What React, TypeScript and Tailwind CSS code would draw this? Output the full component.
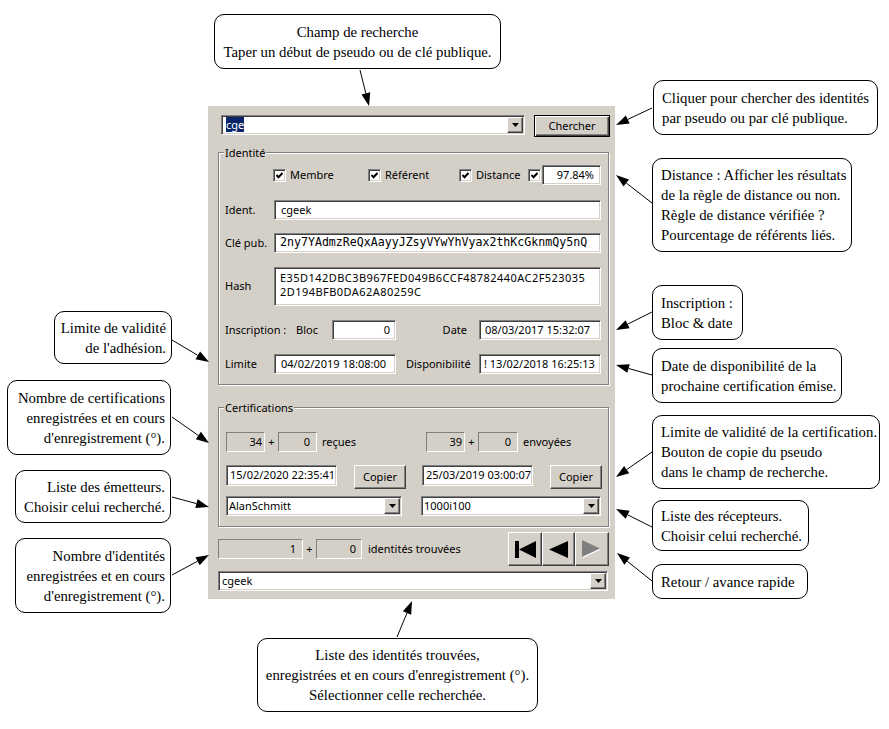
import React from 'react';

const sunken =
  'border border-t-[#808080] border-l-[#808080] border-r-white border-b-white shadow-[inset_1px_1px_0_#404040,inset_-1px_-1px_0_#d4d0c8]';
const flat = 'border border-t-[#808080] border-l-[#808080] border-r-white border-b-white';
const raised =
  'bg-[#d4d0c8] border border-t-white border-l-white border-r-[#404040] border-b-[#404040] shadow-[inset_-1px_-1px_0_#808080]';
const etched = 'border border-[#808080] shadow-[1px_1px_0_#fff,inset_1px_1px_0_#fff]';

const callouts = [
  { pos: 'left-[214px] top-[14px] w-[287px] h-[55px] items-center', lines: ['Champ de recherche', 'Taper un début de pseudo ou de clé publique.'] },
  { pos: 'left-[653px] top-[80px] w-[225px] h-[55px] items-start pl-2', lines: ['Cliquer pour chercher des identités', 'par pseudo ou par clé publique.'] },
  {
    pos: 'left-[652px] top-[158px] w-[200px] h-[94px] items-start pl-2',
    lines: ['Distance : Afficher les résultats', 'de la règle de distance ou non.', 'Règle de distance vérifiée ?', 'Pourcentage de référents liés.'],
  },
  { pos: 'left-[652px] top-[285px] w-[91px] h-[55px] items-start pl-2', lines: ['Inscription :', 'Bloc & date'] },
  { pos: 'left-[652px] top-[348px] w-[190px] h-[55px] items-start pl-2', lines: ['Date de disponibilité de la', 'prochaine certification émise.'] },
  {
    pos: 'left-[652px] top-[415px] w-[228px] h-[74px] items-start pl-2',
    lines: ['Limite de validité de la certification.', 'Bouton de copie du pseudo', 'dans le champ de recherche.'],
  },
  { pos: 'left-[652px] top-[500px] w-[157px] h-[51px] items-start pl-2', lines: ['Liste des récepteurs.', 'Choisir celui recherché.'] },
  { pos: 'left-[652px] top-[564px] w-[156px] h-[35px] items-start pl-2', lines: ['Retour / avance rapide'] },
  { pos: 'left-[54px] top-[311px] w-[118px] h-[53px] items-end pr-[5px]', lines: ['Limite de validité', "de l'adhésion."] },
  {
    pos: 'left-[7px] top-[380px] w-[164px] h-[75px] items-end pr-[5px]',
    lines: ['Nombre de certifications', 'enregistrées et en cours', "d'enregistrement (°)."],
  },
  { pos: 'left-[15px] top-[470px] w-[156px] h-[53px] items-end pr-[5px]', lines: ['Liste des émetteurs.', 'Choisir celui recherché.'] },
  {
    pos: 'left-[15px] top-[538px] w-[156px] h-[75px] items-end pr-[5px]',
    lines: ["Nombre d'identités", 'enregistrées et en cours', "d'enregistrement (°)."],
  },
  {
    pos: 'left-[257px] top-[638px] w-[281px] h-[74px] items-center',
    lines: ['Liste des identités trouvées,', "enregistrées et en cours d'enregistrement (°).", 'Sélectionner celle recherchée.'],
  },
];

const arrows: [number, number, number, number][] = [
  [360, 70, 369, 106],
  [652, 108, 616, 125],
  [652, 203, 616, 175],
  [652, 312, 616, 330],
  [652, 375, 616, 365],
  [652, 452, 616, 477],
  [652, 527, 616, 509],
  [652, 581, 617, 553],
  [172, 340, 209, 362],
  [172, 417, 209, 443],
  [172, 497, 209, 507],
  [172, 575, 209, 555],
  [397, 637, 412, 601],
];

function Arrow({ a }: { a: [number, number, number, number] }) {
  const [x1, y1, x2, y2] = a;
  const len = Math.hypot(x2 - x1, y2 - y1);
  const ux = (x2 - x1) / len;
  const uy = (y2 - y1) / len;
  const bx = x2 - ux * 13;
  const by = y2 - uy * 13;
  const pts = `${x2},${y2} ${bx - uy * 4.5},${by + ux * 4.5} ${bx + uy * 4.5},${by - ux * 4.5}`;
  return (
    <g>
      <line x1={x1} y1={y1} x2={bx} y2={by} stroke="black" strokeWidth="1" />
      <polygon points={pts} fill="black" />
    </g>
  );
}

function DropBtn() {
  return (
    <span className={`${raised} w-[16px] h-[16px] mr-px flex items-center justify-center shrink-0`}>
      <svg width="7" height="4" viewBox="0 0 7 4">
        <path d="M0 0h7L3.5 4z" fill="black" />
      </svg>
    </span>
  );
}

function Combo({ className, children }: { className: string; children: React.ReactNode }) {
  return (
    <div className={`${sunken} bg-white h-[20px] flex items-center shrink-0 ${className}`}>
      <div className="flex-1 overflow-hidden whitespace-nowrap pl-[2px]">{children}</div>
      <DropBtn />
    </div>
  );
}

function Entry({ className, children }: { className: string; children: React.ReactNode }) {
  return (
    <div className={`${sunken} bg-white h-[20px] flex items-center shrink-0 overflow-hidden whitespace-nowrap ${className}`}>
      {children}
    </div>
  );
}

function Count({ className, children }: { className: string; children: React.ReactNode }) {
  return <div className={`${flat} h-[20px] flex items-center justify-end shrink-0 ${className}`}>{children}</div>;
}

function Check() {
  return (
    <span className={`${sunken} bg-white w-[13px] h-[13px] shrink-0 flex items-center justify-center`}>
      <svg width="7" height="7" viewBox="0 0 7 7">
        <polyline points="0.5,3 2.5,5.3 6.5,1" stroke="black" strokeWidth="2" fill="none" />
      </svg>
    </span>
  );
}

function Plus() {
  return <span className="w-[13px] text-center shrink-0">+</span>;
}

function Copier() {
  return <button className={`${raised} w-[52px] h-[24px] shrink-0 flex items-center justify-center`}>Copier</button>;
}

export default function App() {
  return (
    <div className="relative w-[889px] h-[729px] bg-white overflow-hidden">
      {/* fenêtre */}
      <div className="absolute left-[208px] top-[106px] w-[407px] h-[493px] bg-[#d4d0c8] pl-[10px] pr-[6px] pt-[9px] font-['Noto_Sans',sans-serif] text-[11px] text-black flex flex-col">
        <div className="flex items-start">
          <Combo className="ml-[3px] w-[304px]">
            <span className="ml-[2px] bg-[#0a246a] text-white">cge</span>
          </Combo>
          <button className="ml-[9px] -mr-px w-[76px] h-[22px] bg-[#d4d0c8] border border-black shadow-[inset_1px_1px_0_#fff,inset_-1px_-1px_0_#404040,inset_-2px_-2px_0_#808080] flex items-center justify-center">
            Chercher
          </button>
        </div>

        <fieldset className={`${etched} mt-[9px] w-[391px] pl-[6px] pr-[7px] pb-[10px]`}>
          <legend className="-ml-px px-px bg-[#d4d0c8] leading-[13px]">Identité</legend>
          <div className="mt-[6px] h-[20px] flex items-center">
            <div className="ml-[48px] w-[95px] flex items-center gap-[4px]">
              <Check />
              <span>Membre</span>
            </div>
            <div className="w-[91px] flex items-center gap-[4px]">
              <Check />
              <span>Référent</span>
            </div>
            <div className="w-[69px] flex items-center gap-[4px]">
              <Check />
              <span>Distance</span>
            </div>
            <Check />
            <Entry className="ml-px w-[59px] justify-end pr-[6px]">97.84%</Entry>
          </div>
          <div className="mt-[15px] flex items-center">
            <span className="w-[49px]">Ident.</span>
            <Entry className="w-[327px] pl-[6px]">cgeek</Entry>
          </div>
          <div className="mt-[13px] flex items-center">
            <span className="w-[49px]">Clé pub.</span>
            <Entry className="w-[327px] pl-[5px] font-['DejaVu_Sans_Mono',monospace] text-[11.6px]">
              2ny7YAdmzReQxAayyJZsyVYwYhVyax2thKcGknmQy5nQ
            </Entry>
          </div>
          <div className="mt-[14px] flex items-center">
            <span className="w-[49px]">Hash</span>
            <div className={`${sunken} bg-white w-[327px] h-[39px] pl-[5px] pt-[3px] leading-[14px] tracking-[0.45px]`}>
              <div>E35D142DBC3B967FED049B6CCF48782440AC2F523035</div>
              <div>2D194BFB0DA62A80259C</div>
            </div>
          </div>
          <div className="mt-[14px] flex items-center">
            <span className="w-[71px]">Inscription :</span>
            <span className="w-[36px]">Bloc</span>
            <Entry className="w-[64px] justify-end pr-[5px]">0</Entry>
            <span className="ml-auto mr-[12px]">Date</span>
            <Entry className="w-[122px] pl-[5px]">08/03/2017 15:32:07</Entry>
          </div>
          <div className="mt-[14px] flex items-center">
            <span className="w-[49px]">Limite</span>
            <Entry className="w-[122px] pl-[6px]">04/02/2019 18:08:00</Entry>
            <span className="ml-[10px]">Disponibilité</span>
            <Entry className="ml-auto w-[122px] pl-[4px]">! 13/02/2018 16:25:13</Entry>
          </div>
        </fieldset>

        <fieldset className={`${etched} mt-[16px] w-[391px] pl-[7px] pr-[6px] pb-[10px]`}>
          <legend className="-ml-[2px] px-px bg-[#d4d0c8] leading-[13px]">Certifications</legend>
          <div className="mt-[18px] grid grid-cols-[195px_1fr]">
            <div className="flex items-center">
              <Count className="w-[39px] pr-[2px]">34</Count>
              <Plus />
              <Count className="w-[39px] pr-[6px]">0</Count>
              <span className="ml-[5px]">reçues</span>
            </div>
            <div className="flex items-center pl-[5px]">
              <Count className="w-[39px] pr-[2px]">39</Count>
              <Plus />
              <Count className="w-[40px] pr-[6px]">0</Count>
              <span className="ml-[5px]">envoyées</span>
            </div>
          </div>
          <div className="mt-[13px] grid grid-cols-[195px_1fr]">
            <div className="flex items-start">
              <Entry className="w-[111px] h-[21px] pl-[3px]">15/02/2020 22:35:41</Entry>
              <div className="ml-[17px]">
                <Copier />
              </div>
            </div>
            <div className="flex items-start pl-px">
              <Entry className="w-[111px] h-[21px] pl-[3px]">25/03/2019 03:00:07</Entry>
              <div className="ml-[17px]">
                <Copier />
              </div>
            </div>
          </div>
          <div className="mt-[7px] grid grid-cols-[195px_1fr]">
            <Combo className="w-[176px]">AlanSchmitt</Combo>
            <Combo className="w-[180px]">1000i100</Combo>
          </div>
        </fieldset>

        <div className="mt-[5px] h-[34px] flex items-center">
          <Count className="w-[85px] pr-[6px]">1</Count>
          <Plus />
          <Count className="w-[46px] pr-[5px]">0</Count>
          <span className="ml-[6px]">identités trouvées</span>
          <div className="ml-auto flex">
            <button className={`${raised} w-[34px] h-[34px] flex items-center justify-center`}>
              <svg width="21" height="17" viewBox="0 0 21 17">
                <rect x="0" y="0" width="4" height="17" fill="black" />
                <path d="M4 8.5L21 0v17z" fill="black" />
              </svg>
            </button>
            <button className={`${raised} w-[33px] h-[34px] flex items-center justify-center`}>
              <svg width="19" height="17" viewBox="0 0 19 17">
                <path d="M0 8.5L19 0v17z" fill="black" />
              </svg>
            </button>
            <button className={`${raised} w-[34px] h-[34px] flex items-center justify-center`}>
              <svg width="20" height="18" viewBox="0 0 20 18">
                <path d="M1 1L19 9.5L1 18z" fill="white" />
                <path d="M0 0L18 8.5L0 17z" fill="#808080" />
              </svg>
            </button>
          </div>
        </div>

        <Combo className="mt-[5px] w-[390px]">
          <span className="pl-px">cgeek</span>
        </Combo>
      </div>

      {/* bulles */}
      {callouts.map((c, i) => (
        <div
          key={i}
          className={`absolute ${c.pos} border border-black rounded-[10px] bg-white flex flex-col justify-center font-['Liberation_Serif',serif] text-[14.8px] leading-[20px] text-black whitespace-nowrap`}
        >
          {c.lines.map((l) => (
            <div key={l}>{l}</div>
          ))}
        </div>
      ))}

      {/* flèches */}
      <svg className="absolute left-0 top-0 pointer-events-none" width="889" height="729">
        {arrows.map((a, i) => (
          <Arrow key={i} a={a} />
        ))}
      </svg>
    </div>
  );
}
